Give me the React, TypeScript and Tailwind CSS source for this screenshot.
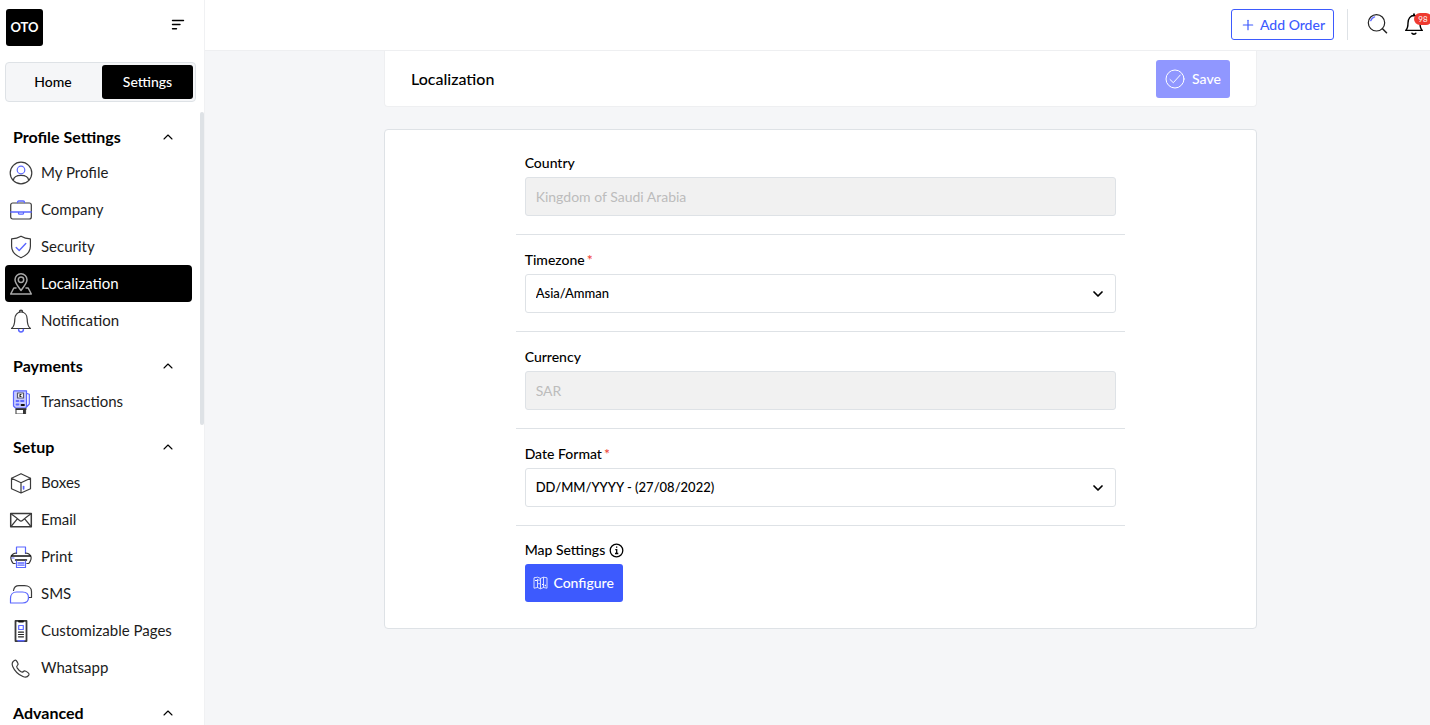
import type { ReactNode } from "react"
import { ChevronDown, ChevronUp, Plus } from "lucide-react"

const BLUE = "#5b67ff"

type NavItem = { name: string; icon: ReactNode; active?: boolean }
type NavGroup = { title: string; items: NavItem[] }

function Icon({ children }: { children: ReactNode }) {
  return (
    <svg
      width="24"
      height="24"
      viewBox="0 0 24 24"
      fill="none"
      stroke="#3a3a3a"
      strokeWidth="1.2"
      strokeLinecap="round"
      strokeLinejoin="round"
      aria-hidden="true"
      className="shrink-0"
    >
      {children}
    </svg>
  )
}

const navGroups: NavGroup[] = [
  {
    title: "Profile Settings",
    items: [
      {
        name: "My Profile",
        icon: (
          <Icon>
            <circle cx="12" cy="12" r="10.8" />
            <circle cx="12" cy="9" r="3.8" stroke={BLUE} />
            <path d="M4.300 19.400c.4-3 3.400-5 7.700-5s7.300 2 7.700 5" />
          </Icon>
        ),
      },
      {
        name: "Company",
        icon: (
          <Icon>
            <rect x="1.700" y="5" width="20.600" height="16" rx="2" />
            <path d="M8.500 4.500c0-1 .5-1.500 1.200-1.500h4.600c.7 0 1.200.5 1.200 1.500M1.700 14h20.600M9.500 14v1.200c0 .6.4 1 1 1h3c.6 0 1-.4 1-1V14" stroke={BLUE} strokeWidth="1.300" />
          </Icon>
        ),
      },
      {
        name: "Security",
        icon: (
          <Icon>
            <path d="M12 1.200c2.600 1.600 5.800 2.500 9.400 2.600v7.400c0 5.300-3.500 9-9.400 11.600-5.900-2.600-9.400-6.300-9.400-11.600V3.800c3.600-.1 6.800-1 9.400-2.600z" />
            <path d="M7.200 12.500l3 3 6.600-7" stroke={BLUE} strokeWidth="1.400" />
          </Icon>
        ),
      },
      {
        name: "Localization",
        active: true,
        icon: (
          <Icon>
            <g stroke="#a8a8a8" strokeWidth="1.500">
              <path d="M12 18.500C8.500 14 6 10.900 6 7.800a6 6 0 0 1 12 0c0 3.100-2.500 6.200-6 10.700z" />
              <circle cx="12" cy="7.800" r="2.700" />
              <path d="M7 16H4.800L1.700 22h20.600l-3.100-6H17" />
            </g>
          </Icon>
        ),
      },
      {
        name: "Notification",
        icon: (
          <Icon>
            <path d="M2.500 19.500c2.300-1.800 3.300-4.500 3.300-9.300C5.800 6 8.300 3 12 3s6.200 3 6.200 7.200c0 4.800 1 7.500 3.300 9.300z" />
            <path d="M10.600 2.600a1.400 1.400 0 0 1 2.800 0" strokeWidth="1.600" />
            <path d="M9.600 20.500a2.400 2.400 0 0 0 4.800 0" stroke={BLUE} strokeWidth="1.500" />
          </Icon>
        ),
      },
    ],
  },
  {
    title: "Payments",
    items: [
      {
        name: "Transactions",
        icon: (
          <Icon>
            <path d="M5 .8h12.500V17l-1 1H6.500l-2-2V2z" fill="#c9ccff" stroke={BLUE} strokeWidth="1.200" />
            <path d="M18 3.500l2.300.8V14L18 16.500" stroke={BLUE} />
            <rect x="8.500" y="3" width="6" height="5" fill="#fff" stroke="#55556a" />
            <path d="M12 4.500h-1v2h1" stroke="#222" />
            <path d="M7.500 11h2M12 11h2.500M7.500 14.500h2" stroke={BLUE} strokeWidth="1.800" />
            <path d="M12.500 15h2.500" stroke="#111" strokeWidth="1.800" />
            <path d="M7 19.500V24h9.500v-4.500z" fill="#fff" stroke="#555" />
            <path d="M14 20h2.500v4H14z" fill="#333" stroke="none" />
            <path d="M7 19h10" stroke="#222" strokeWidth="1.400" />
          </Icon>
        ),
      },
    ],
  },
  {
    title: "Setup",
    items: [
      {
        name: "Boxes",
        icon: (
          <Icon>
            <path d="M12 2.700l9.500 4.500v10.500L12 22l-9.500-4.300V7.200zM2.500 7.200L12 11.700l9.500-4.500M12 11.700V22" />
            <path d="M14.600 15.500v2.300" stroke={BLUE} strokeWidth="1.700" />
          </Icon>
        ),
      },
      {
        name: "Email",
        icon: (
          <Icon>
            <path d="M1.700 5.500h20.600v13.300H1.700z" strokeWidth="1.500" />
            <path d="M2 5.800c3.500 2.500 6 4.500 8.300 6.500 1.200 1 2.200 1 3.400 0 2.300-2 4.800-4 8.300-6.500M2 18.500l6.300-7.600M22 18.500l-6.300-7.600" />
          </Icon>
        ),
      },
      {
        name: "Print",
        icon: (
          <Icon>
            <path d="M7.500 8.500V2h9v6.500" stroke={BLUE} />
            <path d="M7.500 8c-2.500 0-4 1-5.200 3-1 1.800-.3 4.500 1.900 7.500h2M16.500 8c2.500 0 4 1 5.200 3 1 1.800.3 4.500-1.900 7.500h-2" />
            <path d="M2.500 11h19M6.500 15h11" stroke="#111" strokeWidth="1.500" />
            <path d="M3 13h2" stroke={BLUE} />
            <path d="M7.500 16v6.500h9V16" stroke={BLUE} />
            <path d="M9 18h6M9 20.200h6" stroke={BLUE} strokeWidth="1.300" />
          </Icon>
        ),
      },
      {
        name: "SMS",
        icon: (
          <Icon>
            <path d="M4.500 8.500C5 5.500 7 3.700 10 3.700h5.500c4 0 7 2.300 7 5.800v6h-3" />
            <path d="M1.500 21v-4.500c0-3.800 2.300-6.500 6-6.500h6c3.700 0 6 2.300 6 5.500S17.200 21 13.500 21z" stroke={BLUE} />
          </Icon>
        ),
      },
      {
        name: "Customizable Pages",
        icon: (
          <Icon>
            <path d="M6.500 1.900h11v20.200h-11z" strokeWidth="1.800" />
            <path d="M10 2.500h4" stroke="#111" strokeWidth="1.800" />
            <path d="M9.700 6.500h4.600v4H9.700z" stroke={BLUE} />
            <path d="M9.500 13.200h5M9.500 15.500h5M9.500 17.800h5" stroke="#222" />
            <path d="M9 21.700h6" stroke={BLUE} strokeWidth="1.500" />
          </Icon>
        ),
      },
      {
        name: "Whatsapp",
        icon: (
          <Icon>
            <path d="M7.300 4.700c.7.900 1.300 1.800 1.700 2.900.3.800 0 1.300-.6 1.800-.9.700-.9 1.400-.3 2.400 1 1.500 2.400 3 4 4 .9.600 1.600.5 2.300-.3.600-.7 1.100-.9 1.900-.5 1.100.5 2.300 1.300 3.200 2.100.7.600.7 1.200.3 2-1.300 2.100-3.500 2.500-5.900 1.400-4.500-2-8.400-5.900-10.200-10.100C2.600 7.800 3.100 5.900 5.400 4.500c.8-.5 1.400-.4 1.900.2z" />
          </Icon>
        ),
      },
    ],
  },
  { title: "Advanced", items: [] },
]

function Sidebar() {
  return (
    <aside className="flex w-[205px] shrink-0 flex-col border-r border-[#f0f1f3] bg-white">
      <div className="flex items-start justify-between pt-[9px] pr-[19px] pl-[6px]">
        <a
          href="#"
          className="flex size-[37px] items-center justify-center rounded-[3px] bg-black text-[13px] font-bold text-white"
        >
          OTO
        </a>
        <button type="button" aria-label="Collapse menu" className="pt-[10px]">
          <svg width="14" height="12" viewBox="0 0 14 12" stroke="#000" strokeWidth="1.400" strokeLinecap="round">
            <path d="M1.500 1.500h11M1.500 5.500h7.500M1.500 9.700h4" />
          </svg>
        </button>
      </div>

      <div className="mt-4 mr-2 ml-[5px] flex h-10 rounded-[4px] border border-[#dee2e6] bg-[#f5f6f8] p-[2px] text-sm font-medium">
        <button type="button" className="flex-1 pr-1">
          Home
        </button>
        <button type="button" className="w-[91px] rounded-[3px] bg-black text-white">
          Settings
        </button>
      </div>

      <div className="mt-[10px] flex min-h-0 flex-1">
        <nav className="flex-1 overflow-hidden pt-2 pr-2 pl-[5px]">
          {navGroups.map((group) => (
            <section key={group.title} className="mb-[10px]">
              <button
                type="button"
                className="flex h-[34px] w-full items-center justify-between pr-4 pl-2 text-base font-bold"
              >
                {group.title}
                <ChevronUp size={16} strokeWidth={1.6} />
              </button>
              <ul>
                {group.items.map((item) => (
                  <li key={item.name}>
                    <a
                      href="#"
                      className={
                        item.active
                          ? "flex h-[37px] items-center gap-2 rounded-[4px] bg-black pl-1 text-[15px] text-white"
                          : "flex h-[37px] items-center gap-2 pl-1 text-[15px] text-[#1c1c1c]"
                      }
                    >
                      {item.icon}
                      <span className="whitespace-nowrap">{item.name}</span>
                    </a>
                  </li>
                ))}
              </ul>
            </section>
          ))}
        </nav>
        {/* scroll thumb */}
        <div className="h-[51%] w-1 rounded-full bg-[#dee2e6]" />
      </div>
    </aside>
  )
}

function Header() {
  return (
    <header className="flex h-[51px] shrink-0 items-start justify-end border-b border-[#eeeff1] bg-white pt-[9px]">
      <button
        type="button"
        className="flex h-[31px] w-[103px] items-center justify-center gap-1 rounded-[3px] border border-[#3d5afe] text-sm font-medium whitespace-nowrap text-[#3d5afe]"
      >
        <Plus size={16} strokeWidth={1.8} />
        Add Order
      </button>
      <div className="ml-[13px] h-[31px] w-px bg-[#dee2e6]" />
      <button type="button" aria-label="Search" className="mt-1 ml-[18px]">
        <svg width="22" height="22" viewBox="0 0 22 22" fill="none" stroke="#222" strokeWidth="1.200" strokeLinecap="round">
          <circle cx="10.500" cy="9.800" r="8.200" />
          <path d="M16.500 15.800l4 3.900" strokeWidth="1.600" />
          <path d="M4.800 7.500a6.300 6.300 0 0 1 3.700-3.600" stroke={BLUE} strokeWidth="1.500" />
        </svg>
      </button>
      <button type="button" aria-label="Notifications" className="relative mt-1 mr-[6px] ml-4">
        <svg width="20" height="24" viewBox="0 0 20 24" fill="none" stroke="#000" strokeWidth="1.400" strokeLinecap="round" strokeLinejoin="round">
          <path d="M1.700 17.400c1.900-1.800 2.300-3.900 2.300-7.400 0-4.500 2.400-7.500 6-7.500s6 3 6 7.500c0 3.500.4 5.600 2.300 7.400z" />
          <path d="M10 1.200v1.200" strokeWidth="1.800" />
          <path d="M8 20.200c.4 1.200 3.400 1.200 3.800 0" strokeWidth="1.600" />
        </svg>
        <span className="absolute top-0 left-[10px] flex h-3 w-[18px] items-center justify-center rounded-full bg-[#ee3a30] text-[8px] leading-3 text-white">
          98
        </span>
      </button>
    </header>
  )
}

const selectFields = {
  timezone: ["Asia/Amman", "Asia/Riyadh"],
  dateFormat: ["DD/MM/YYYY - (27/08/2022)", "MM/DD/YYYY - (08/27/2022)"],
}

function Field({ id, label, required, children }: { id: string; label: string; required?: boolean; children: ReactNode }) {
  return (
    <div className="flex flex-col gap-1 border-b border-[#dee2e6] px-[9px] pt-[15px] pb-[18px]">
      <label htmlFor={id} className="text-sm leading-5 font-medium">
        {label}
        {required && <span className="ml-[2px] text-[#ee3a30]">*</span>}
      </label>
      {children}
    </div>
  )
}

function LockedInput({ id, value }: { id: string; value: string }) {
  return (
    <input
      id={id}
      type="text"
      disabled
      defaultValue={value}
      className="h-[39px] w-full rounded-[3px] border border-[#dee2e6] bg-[#f1f1f1] px-[10px] text-sm text-[#bcbcbc]"
    />
  )
}

function SelectBox({ id, options }: { id: string; options: string[] }) {
  return (
    <div className="relative">
      <select
        id={id}
        className="block h-[39px] w-full appearance-none rounded-[3px] border border-[#dee2e6] bg-white px-[10px] text-[13px] font-medium"
      >
        {options.map((option) => (
          <option key={option}>{option}</option>
        ))}
      </select>
      <ChevronDown size={16} strokeWidth={2.6} className="pointer-events-none absolute top-3 right-[10px]" />
    </div>
  )
}

export default function App() {
  return (
    <div className="flex h-screen overflow-hidden bg-[#f5f6f8] font-['Lato','Open_Sans',sans-serif] text-black">
      <Sidebar />
      <div className="flex min-w-0 flex-1 flex-col">
        <Header />
        <main className="flex-1 overflow-hidden pl-[6px]">
          <div className="mx-auto max-w-[873px]">
            <div className="flex h-14 items-center justify-between rounded-b-[4px] border-x border-b border-[#eeeff1] bg-white pr-[26px] pl-[26px]">
              <h1 className="text-base font-medium">Localization</h1>
              <button
                type="button"
                className="flex h-[38px] w-[74px] items-center justify-center gap-[7px] rounded-[3px] bg-[#9097ff] text-sm font-medium text-white"
              >
                <svg width="20" height="20" viewBox="0 0 20 20" fill="none" stroke="#fff" strokeLinecap="round" strokeLinejoin="round">
                  <circle cx="10" cy="10" r="9" />
                  <path d="M5 10.500l3.300 3.200 7-7.700" />
                </svg>
                Save
              </button>
            </div>

            <form className="mt-[22px] rounded-[4px] border border-[#dee2e6] bg-white pt-2 pb-[26px]">
              <div className="mx-auto w-[70%]">
                <Field id="country" label="Country">
                  <LockedInput id="country" value="Kingdom of Saudi Arabia" />
                </Field>
                <Field id="timezone" label="Timezone" required>
                  <SelectBox id="timezone" options={selectFields.timezone} />
                </Field>
                <Field id="currency" label="Currency">
                  <LockedInput id="currency" value="SAR" />
                </Field>
                <Field id="date-format" label="Date Format" required>
                  <SelectBox id="date-format" options={selectFields.dateFormat} />
                </Field>

                <div className="px-[9px] pt-[14px]">
                  <div className="flex items-center gap-1 text-sm leading-5 font-medium">
                    Map Settings
                    <svg width="15" height="15" viewBox="0 0 15 15" fill="none" stroke="#000" strokeWidth="1.300">
                      <circle cx="7.500" cy="7.500" r="6.300" />
                      <path d="M6.300 6.700h1.400v3.600M6 10.500h3.300" />
                      <path d="M7 3.500h1.300v1.300H7z" fill="#000" stroke="none" />
                    </svg>
                  </div>
                  <button
                    type="button"
                    className="mt-1 flex h-[38px] w-[98px] items-center justify-center gap-[5px] rounded-[3px] bg-[#3d5afe] text-sm font-medium text-white"
                  >
                    <svg width="15" height="14" viewBox="0 0 15 14" fill="none" stroke="#fff" strokeWidth=".8" strokeLinejoin="round">
                      <path d="M1 1.800l3.500-.6 3 1.200 3-1.200 3.500.6v10.400l-3.500-.7-3 1.300-3-1.300-3.500.7zM4.500 3v8.500M7.500 2.400v10.200M10.500 1.200v10.300" />
                      <path d="M2 4.500h2M6 3.500v1.200M6 7v1.200M9 8.500h1.500M12.300 8.700v1.500" strokeWidth="1.200" />
                    </svg>
                    Configure
                  </button>
                </div>
              </div>
            </form>
          </div>
        </main>
      </div>
    </div>
  )
}
